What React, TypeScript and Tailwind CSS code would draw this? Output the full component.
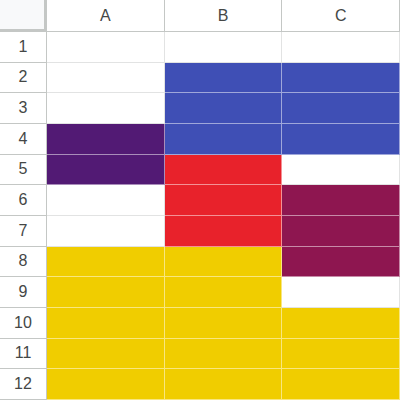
import { Fragment } from 'react';

const PURPLE = 'bg-[#521a74]';
const BLUE = 'bg-[#3f4fb5]';
const RED = 'bg-[#e8222b]';
const MAROON = 'bg-[#8e1650]';
const YELLOW = 'bg-[#f0cd00]';

// one entry per row: columns A, B, C (null = empty white cell)
const rows: (string | null)[][] = [
  [null, null, null],
  [null, BLUE, BLUE],
  [null, BLUE, BLUE],
  [PURPLE, BLUE, BLUE],
  [PURPLE, RED, null],
  [null, RED, MAROON],
  [null, RED, MAROON],
  [YELLOW, YELLOW, MAROON],
  [YELLOW, YELLOW, null],
  [YELLOW, YELLOW, YELLOW],
  [YELLOW, YELLOW, YELLOW],
  [YELLOW, YELLOW, YELLOW],
];

export default function App() {
  return (
    <div
      className="grid h-[400px] w-[400px] grid-cols-[47px_repeat(3,1fr)] grid-rows-[32px_repeat(12,1fr)] overflow-hidden bg-white text-[16px] text-[#444746]"
      style={{ fontFamily: '"Liberation Sans", Arial, sans-serif' }}
    >
      <div className="border-b-[3px] border-r-[3px] border-[#c4c7c5] bg-[#f8f9fa]" />
      {['A', 'B', 'C'].map((c) => (
        <div key={c} className="flex items-center justify-center border-b border-r border-[#c4c7c5] bg-white">
          {c}
        </div>
      ))}
      {rows.map((row, i) => (
        <Fragment key={i}>
          <div className="flex items-center justify-center border-b border-r border-[#c4c7c5] bg-white">
            {i + 1}
          </div>
          {row.map((color, j) => (
            <div
              key={j}
              className={color ? `${color} border-b border-r border-white/50` : 'border-b border-r border-[#e2e3e3] bg-white'}
            />
          ))}
        </Fragment>
      ))}
    </div>
  );
}
